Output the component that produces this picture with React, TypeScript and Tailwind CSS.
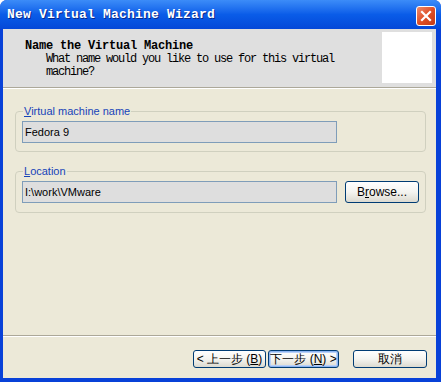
import React from 'react';

const mono = { fontFamily: '"Liberation Mono", "DejaVu Sans Mono", monospace' };

const XpButton: React.FC<{ children: React.ReactNode; isDefault?: boolean; className?: string }> = ({
  children,
  isDefault = false,
  className = '',
}) => (
  <button
    type="button"
    className={`h-[18px] rounded-[3px] border border-[#003c74] bg-gradient-to-b from-[#ffffff] via-[#f4f4f0] to-[#dcdad0] text-[12px] leading-none text-black flex items-center justify-center ${
      isDefault ? 'shadow-[inset_0_0_0_1px_#8cb4f2,inset_0_0_0_2px_#b9d1f7]' : ''
    } ${className}`}
  >
    {children}
  </button>
);

export default function App() {
  return (
    <div className="w-[441px] h-[382px] flex flex-col bg-[#0841d8] rounded-t-[7px] overflow-hidden font-['Liberation_Sans',Arial,sans-serif]">
      {/* タイトルバー */}
      <div className="h-[29px] shrink-0 flex items-center pl-[7px] pr-[5px] bg-gradient-to-b from-[#3c8cf8] via-[#0a5ce8] to-[#0548d8]">
        <span
          className="text-white font-bold text-[13px] tracking-[0.2px] [text-shadow:1px_1px_0_#0a2a8c]"
          style={mono}
        >
          New Virtual Machine Wizard
        </span>
        <div className="ml-auto mt-[2px] w-[20px] h-[20px] rounded-[3px] border border-white bg-gradient-to-br from-[#ef8a6a] via-[#df4f26] to-[#c43a14] flex items-center justify-center">
          <svg width="12" height="12" viewBox="0 0 12 12">
            <path d="M2 2 L10 10 M10 2 L2 10" stroke="white" strokeWidth="2.2" strokeLinecap="square" />
          </svg>
        </div>
      </div>

      <div className="flex-1 ml-[3px] mr-[5px] mb-[4px] bg-[#ece9d8] flex flex-col">
        {/* ヘッダー */}
        <div className="h-[59px] shrink-0 bg-[#dfdfdf] border-b border-b-[#aca899] flex">
          <div className="pl-[22px] pt-[10px] text-black" style={mono}>
            <div className="font-bold text-[12px] leading-[14px] tracking-[-0.2px]">Name the Virtual Machine</div>
            <div className="pl-[21px] text-[12px] leading-[13px] tracking-[-1.2px]">
              What name would you like to use for this virtual
              <br />
              machine?
            </div>
          </div>
          <div className="ml-auto mt-[3px] mr-[4px] w-[50px] h-[51px] bg-white" />
        </div>
        <div className="h-px bg-white shrink-0" />

        {/* 本体 */}
        <div className="flex-1 pl-[12px] pr-[10px] pt-[17px]">
          <fieldset className="border border-[#d0d0bf] rounded-[4px] h-[46px] pl-[6px] pr-[4px]">
            <legend className="ml-[1px] px-px text-[11px] leading-[11px] text-[#1744b8]">
              <span className="underline">V</span>irtual machine name
            </legend>
            <div className="mt-[4px] w-[315px] h-[22px] border border-[#7f9db9] bg-[#dedede] text-[11px] flex items-center pl-[2px] text-black">
              Fedora 9
            </div>
          </fieldset>

          <fieldset className="mt-[14px] border border-[#d0d0bf] rounded-[4px] h-[47px] pl-[6px] pr-[4px] flex">
            <legend className="ml-[1px] px-px text-[11px] leading-[11px] text-[#1744b8]">
              <span className="underline">L</span>ocation
            </legend>
            <div className="flex items-start gap-[8px] mt-[4px]">
              <div className="w-[315px] h-[22px] border border-[#7f9db9] bg-[#dedede] text-[11px] flex items-center pl-[2px] text-black">
                I:\work\VMware
              </div>
              <XpButton className="w-[74px] h-[22px] text-[11px]">
                B<span className="underline">r</span>owse...
              </XpButton>
            </div>
          </fieldset>
        </div>

        {/* フッター */}
        <div className="h-px bg-[#aca899] shrink-0" />
        <div className="h-px bg-white shrink-0" />
        <div className="h-[41px] shrink-0 flex items-start pt-[13px] pl-[190px]">
          <XpButton className="w-[73px]">
            &lt; 上一步 (<span className="underline">B</span>)
          </XpButton>
          <XpButton className="w-[71px] ml-[2px]" isDefault>
            下一步 (<span className="underline">N</span>) &gt;
          </XpButton>
          <XpButton className="w-[74px] ml-[14px]">取消</XpButton>
        </div>
      </div>
    </div>
  );
}
